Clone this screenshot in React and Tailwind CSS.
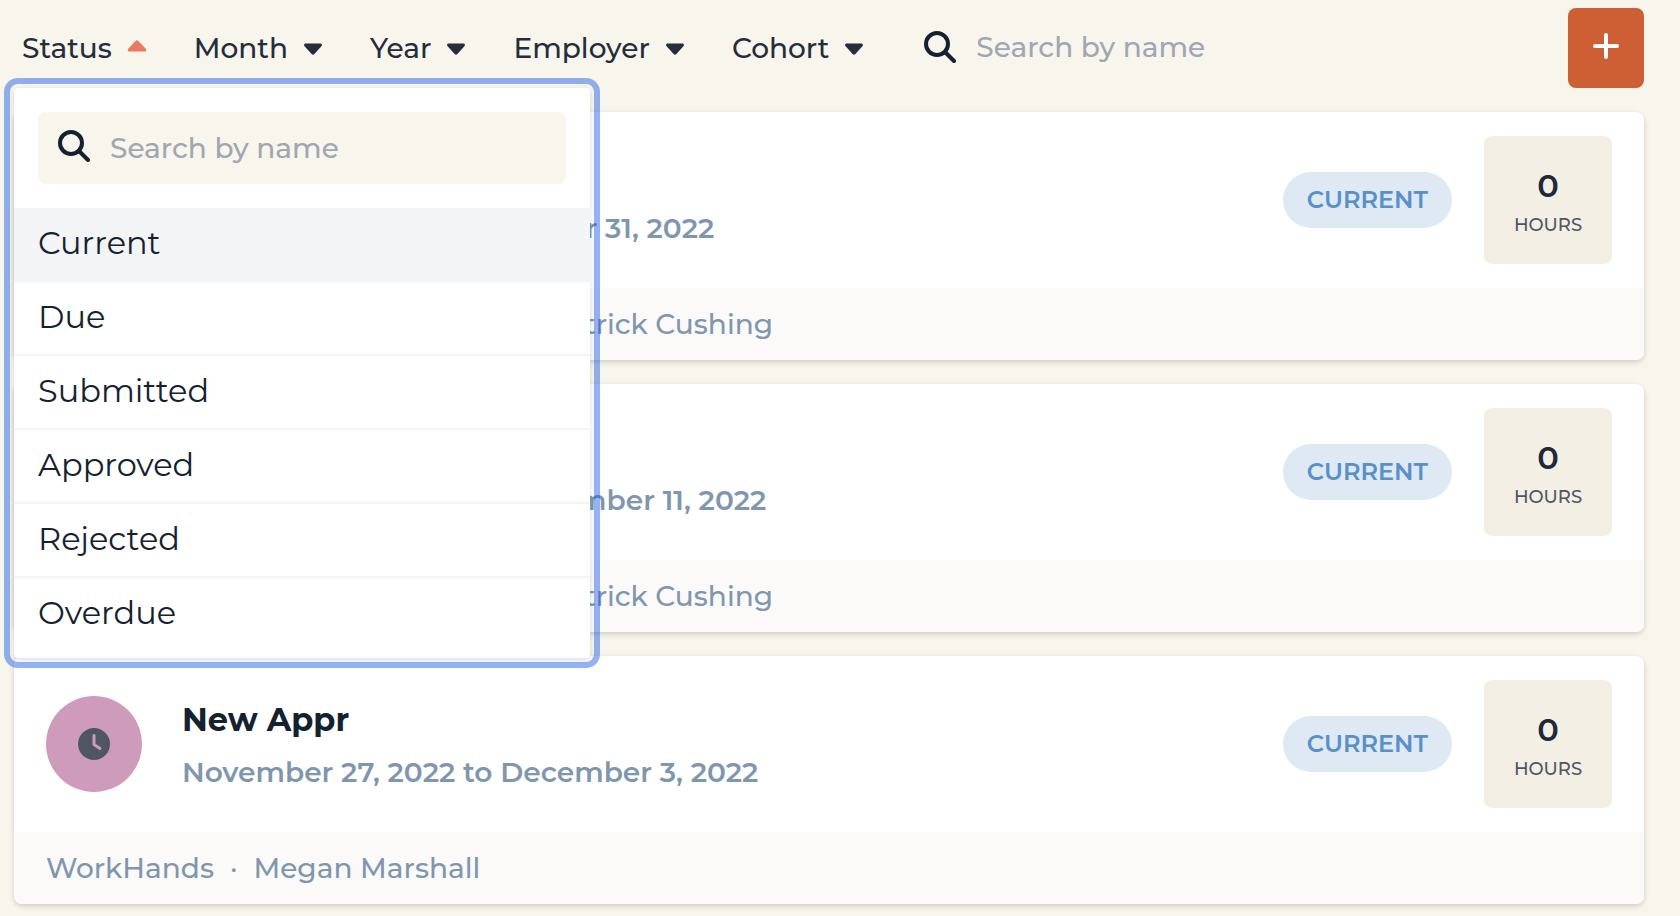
import { useState } from 'react';

const STATUSES = ['Current', 'Due', 'Submitted', 'Approved', 'Rejected', 'Overdue'];

const FILTERS = ['Status', 'Month', 'Year', 'Employer', 'Cohort'];

const ENTRIES = [
  {
    id: 1,
    name: 'Apprentice One',
    period: 'October 1, 2022 to December 31, 2022',
    employer: 'WorkHands Mechanical Training',
    mentor: 'Patrick Cushing',
    hours: 0,
  },
  {
    id: 2,
    name: 'Apprentice Two',
    period: 'November 28, 2022 to December 11, 2022',
    employer: 'WorkHands Mechanical Training',
    mentor: 'Patrick Cushing',
    hours: 0,
  },
  {
    id: 3,
    name: 'New Appr',
    period: 'November 27, 2022 to December 3, 2022',
    employer: 'WorkHands',
    mentor: 'Megan Marshall',
    hours: 0,
  },
];

function SearchIcon() {
  return (
    <svg width="32" height="32" viewBox="0 0 32 32" fill="none" className="shrink-0 text-[#142230]" aria-hidden="true">
      <circle cx="13" cy="13" r="11" stroke="currentColor" strokeWidth="4" />
      <path d="M21 21l9 9" stroke="currentColor" strokeWidth="4" strokeLinecap="round" />
    </svg>
  );
}

function Caret({ open }) {
  return open ? (
    <svg width="20" height="12" viewBox="0 0 20 12" className="mb-1 shrink-0 text-[#ee7762]" aria-hidden="true">
      <path d="M8.6.9a2 2 0 0 1 2.8 0l7.4 7.8c1 1.2.4 2.8-1.1 2.8H2.3C.8 11.5.2 9.9 1.200 8.700z" fill="currentColor" />
    </svg>
  ) : (
    <svg width="20" height="12" viewBox="0 0 20 12" className="mt-0.5 shrink-0 text-[#252d3b]" aria-hidden="true">
      <path d="M8.6 11.1a2 2 0 0 0 2.8 0l7-7.8C19.5 2.1 18.8.5 17.3.5H2.7C1.2.5.5 2.1 1.6 3.3z" fill="currentColor" />
    </svg>
  );
}

function ClockIcon() {
  return (
    <svg width="32" height="32" viewBox="0 0 32 32" fill="none" aria-hidden="true">
      <circle cx="16" cy="16" r="16" fill="#4f5663" />
      <path d="M16 7.5V16.500L22 20.500" stroke="#cf9bbb" strokeWidth="3" strokeLinecap="round" strokeLinejoin="round" />
    </svg>
  );
}

function StatusMenu() {
  return (
    <div className="absolute left-0 top-20 z-10 w-[576px] rounded-sm bg-white pt-6 pb-2 shadow-[0_2px_6px_rgba(0,0,0,0.14)] outline-[6px] outline-offset-4 outline-[rgba(17,86,235,0.45)]">
      <label className="mx-6 mb-6 flex h-[72px] items-center gap-5 rounded-lg bg-[#f8f5ec] px-5">
        <span className="mb-1">
          <SearchIcon />
        </span>
        <input
          type="text"
          aria-label="Search statuses"
          placeholder="Search by name"
          className="min-w-0 flex-1 bg-transparent text-[28px] font-medium placeholder:text-[#a0a6b2] outline-none"
        />
      </label>
      <ul className="text-[32px] leading-[46px] text-[#142230]">
        {STATUSES.map((status) => (
          <li key={status} className="border-b-2 border-[#f3f4f6] last:border-b-0 first:bg-[#f3f4f6]">
            <button type="button" className="block w-full px-6 pt-3 pb-3.5 text-left">
              {status}
            </button>
          </li>
        ))}
      </ul>
    </div>
  );
}

function EntryCard({ entry }) {
  return (
    <article className="overflow-hidden rounded-lg bg-white shadow-[0_2px_6px_rgba(0,0,0,0.1),0_2px_4px_rgba(0,0,0,0.08)]">
      <div className="flex items-center gap-8 px-8 py-6">
        <div className="flex size-24 shrink-0 items-center justify-center rounded-full bg-[#cf9bbb]">
          <ClockIcon />
        </div>
        <div className="ml-2 flex-1 pt-1">
          <h2 className="mb-1 text-[32px] leading-[48px] font-bold text-[#142230]">{entry.name}</h2>
          <p className="text-[28px] leading-[48px] font-semibold text-[#7f97ae]">{entry.period}</p>
        </div>
        <span className="rounded-full bg-[#dfe9f3] px-6 text-2xl leading-[56px] font-semibold text-[#5790ca]">
          CURRENT
        </span>
        <div className="flex size-32 shrink-0 flex-col items-center justify-center rounded-lg bg-[#f4efe4]">
          <span className="text-[32px] leading-[50px] font-semibold text-[#1f2937]">{entry.hours}</span>
          <span className="text-lg leading-7 font-medium text-[#4f5663]">HOURS</span>
        </div>
      </div>
      <div className="flex h-[72px] items-center gap-4 bg-[#fbfaf8] px-8 text-[28px] font-medium text-[#7f97ae]">
        <span>{entry.employer}</span>
        <span>·</span>
        <span>{entry.mentor}</span>
      </div>
    </article>
  );
}

export default function App() {
  const [openFilter, setOpenFilter] = useState('Status');

  return (
    <div className="min-h-screen bg-[#f8f5ec] pt-2 pr-9 pb-3 pl-3.5 font-['Montserrat','Inter',sans-serif]">
      <header className="relative mb-6 flex h-20 items-center pl-2">
        <nav className="flex items-center gap-[47px]" aria-label="Filters">
          {FILTERS.map((filter) => (
            <button
              key={filter}
              type="button"
              aria-expanded={openFilter === filter}
              onClick={() => setOpenFilter(openFilter === filter ? null : filter)}
              className="flex items-center gap-[15px] text-[28px] font-medium text-[#252d3b]"
            >
              {filter}
              <Caret open={openFilter === filter} />
            </button>
          ))}
        </nav>
        <label className="ml-15 flex flex-1 items-center gap-5 pb-0.5">
          <SearchIcon />
          <input
            type="text"
            aria-label="Search entries"
            placeholder="Search by name"
            className="min-w-0 flex-1 bg-transparent text-[28px] font-medium placeholder:text-[#a0a6b2] outline-none"
          />
        </label>
        <button
          type="button"
          aria-label="Add entry"
          className="flex h-20 w-19 shrink-0 items-center justify-center rounded-lg bg-[#ce5f34] text-white"
        >
          <svg width="26" height="26" viewBox="0 0 26 26" fill="none" className="mb-1" aria-hidden="true">
            <path d="M13 2v22M2 13h22" stroke="currentColor" strokeWidth="4" strokeLinecap="round" />
          </svg>
        </button>
        {openFilter === 'Status' && <StatusMenu />}
      </header>

      <main className="flex flex-col gap-6">
        {ENTRIES.map((entry) => (
          <EntryCard key={entry.id} entry={entry} />
        ))}
      </main>
    </div>
  );
}
